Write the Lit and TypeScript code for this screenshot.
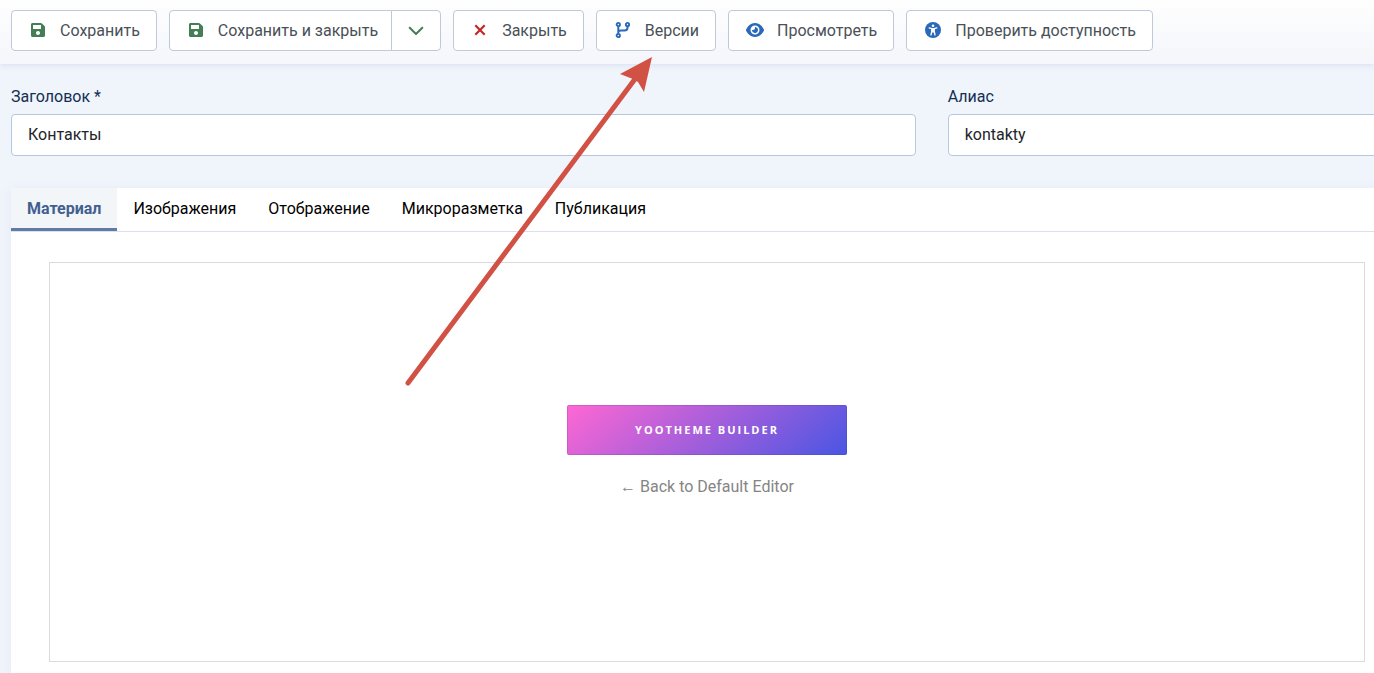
import { LitElement, html, css, svg } from "lit";
import { customElement, property } from "lit/decorators.js";

const shapes = {
  save: {
    box: "0 0 448 512",
    width: 14,
    body: svg`<path d="M433.941 129.941l-83.882-83.882A48 48 0 0 0 316.118 32H48C21.490 32 0 53.490 0 80v352c0 26.510 21.490 48 48 48h352c26.510 0 48-21.490 48-48V163.882a48 48 0 0 0-14.059-33.941zM224 416c-35.346 0-64-28.654-64-64 0-35.346 28.654-64 64-64s64 28.654 64 64c0 35.346-28.654 64-64 64zm96-304.520V212c0 6.627-5.373 12-12 12H76c-6.627 0-12-5.373-12-12V108c0-6.627 5.373-12 12-12h228.520c3.183 0 6.235 1.264 8.485 3.515l3.480 3.480A11.996 11.996 0 0 1 320 111.480z"/>`,
  },
  close: {
    box: "0 0 12 16",
    width: 12,
    body: svg`<path d="M1.300 3.300l9.400 9.400M10.700 3.300l-9.400 9.400" fill="none" stroke="currentColor" stroke-width="2.200"/>`,
  },
  down: {
    box: "0 0 16 16",
    width: 16,
    body: svg`<path d="M1.700 5.700L8 12l6.300-6.300" fill="none" stroke="currentColor" stroke-width="2" stroke-linecap="round" stroke-linejoin="round"/>`,
  },
  branch: {
    box: "0 0 14 16",
    width: 14,
    body: svg`<g fill="none" stroke="currentColor" stroke-width="1.900"><circle cx="2.300" cy="2.500" r="1.650"/><circle cx="11.500" cy="2.500" r="1.650"/><circle cx="2.300" cy="13.500" r="1.650"/><path stroke-width="2" d="M2.300 4.300v7.400M2.500 9.500Q3.300 8.500 5 8.500H8.500Q11.500 8.500 11.500 5.700V4.300"/></g>`,
  },
  eye: {
    box: "0 0 576 512",
    width: 18,
    body: svg`<path d="M288 32c-80.800 0-145.500 36.800-192.600 80.600C48.600 156 17.300 208 2.500 243.700c-3.300 7.900-3.300 16.700 0 24.600C17.300 304 48.600 356 95.400 399.400C142.500 443.200 207.200 480 288 480s145.500-36.800 192.600-80.600c46.800-43.500 78.100-95.400 93-131.100c3.300-7.900 3.300-16.700 0-24.600c-14.900-35.700-46.200-87.700-93-131.100C433.500 68.800 368.800 32 288 32zM144 256a144 144 0 1 1 288 0 144 144 0 1 1-288 0zm144-64c0 35.300-28.700 64-64 64c-7.100 0-13.900-1.200-20.300-3.300c-5.500-1.800-11.900 1.600-11.700 7.400c.3 6.900 1.300 13.800 3.200 20.700c13.700 51.200 66.400 81.600 117.600 67.900s81.600-66.400 67.900-117.600c-11.100-41.500-47.800-69.400-88.600-71.100c-5.800-.2-9.200 6.100-7.400 11.700c2.100 6.400 3.300 13.200 3.300 20.300z"/>`,
  },
  access: {
    box: "0 0 16 16",
    width: 16,
    body: svg`<circle cx="8" cy="8" r="8"/><circle cx="8" cy="3.700" r="1.300" fill="#fff"/><path d="M4.200 5.900L6.800 6.700V9.500L6 12.800M11.800 5.900L9.200 6.700V9.500L10 12.800" fill="none" stroke="#fff" stroke-width="1.400" stroke-linecap="round" stroke-linejoin="round"/><path d="M6.600 6.100h2.800v4.300H6.600z" fill="#fff"/>`,
  },
};

type ShapeName = keyof typeof shapes;

@customElement("tool-icon")
class ToolIcon extends LitElement {
  @property() name: ShapeName = "save";

  static styles = css`
    :host {
      display: flex;
      justify-content: center;
      width: 20px;
      padding-bottom: 1px;
    }
    svg {
      display: block;
      fill: currentColor;
      overflow: visible;
    }
  `;

  render() {
    const s = shapes[this.name];
    return html`<svg viewBox=${s.box} width=${s.width} height="16" aria-hidden="true">${s.body}</svg>`;
  }
}

@customElement("app-root")
class AppRoot extends LitElement {
  static styles = css`
    :host {
      display: flex;
      flex-direction: column;
      position: relative;
      min-height: 100vh;
      overflow: hidden;
      background: #f0f4fb;
      color: #212529;
      font: 16px/24px Roboto, "Noto Sans", sans-serif;
    }
    * {
      box-sizing: border-box;
    }
    button,
    input {
      font: inherit;
      color: inherit;
      margin: 0;
    }
    .toolbar {
      display: flex;
      gap: 12px;
      padding: 10px 11px 13px;
      background: linear-gradient(#fefefe, #f4f6fb);
      box-shadow: 0 1px 6px #d5dfef;
    }
    .tool {
      display: flex;
      align-items: center;
      gap: 12px;
      height: 41px;
      padding: 0 16px;
      border: 1px solid #c0c9d9;
      border-radius: 4px;
      background: #fff;
      color: #495057;
      white-space: nowrap;
    }
    .split {
      display: flex;
    }
    .split .tool:first-child {
      padding-right: 13px;
      border-radius: 4px 0 0 4px;
    }
    .split .tool:last-child {
      padding: 0 14px;
      margin-left: -1px;
      border-radius: 0 4px 4px 0;
    }
    .green {
      color: #457d54;
    }
    .red {
      color: #c52827;
    }
    .blue {
      color: #2a69b8;
    }
    .fields {
      display: grid;
      grid-template-columns: 2fr 1fr;
      gap: 32px;
      padding: 21px 0 32px 11px;
      margin-right: -26px;
    }
    .field {
      display: flex;
      flex-direction: column;
      gap: 5px;
    }
    .field label {
      color: #132f53;
    }
    .field input {
      width: 100%;
      height: 42px;
      padding: 0 16px 2px;
      border: 1px solid #b6c8e1;
      border-radius: 4px;
      background: #fff;
    }
    .card {
      flex: 1;
      margin-left: 11px;
      background: #fff;
      box-shadow: 0 2px 10px #e2e9f4;
    }
    .tabs {
      display: flex;
      height: 44px;
      border-bottom: 1px solid #dbe1ea;
    }
    .tab {
      padding: 2px 16px 0;
      border: 0;
      border-bottom: 3px solid transparent;
      background: none;
      color: #000;
    }
    .tab.active {
      background: #f2f6f9;
      border-color: #5f7ba6;
      color: #42608f;
      font-weight: 700;
    }
    .editor {
      display: flex;
      flex-direction: column;
      align-items: center;
      justify-content: center;
      gap: 20px;
      height: 400px;
      margin: 30px 9px 11px 38px;
      padding-bottom: 20px;
      border: 1px solid #dadbdd;
    }
    .builder {
      width: 280px;
      max-width: 100%;
      height: 50px;
      border: 1px solid rgba(70, 60, 150, 0.2);
      border-radius: 2px;
      background: linear-gradient(140deg, #ff67d3, #4956e3) border-box;
      color: #fff;
      font: 700 11px/16px "Open Sans", "Noto Sans", sans-serif;
      letter-spacing: 2px;
      text-transform: uppercase;
    }
    .back {
      color: #858585;
      text-decoration: none;
    }
    .pointer {
      position: absolute;
      left: 400px;
      top: 50px;
      width: 260px;
      height: 340px;
      pointer-events: none;
    }
  `;

  tool(icon: ShapeName, tone: string, label: string) {
    return html`<button class="tool" type="button">
      <tool-icon class=${tone} name=${icon}></tool-icon>${label}
    </button>`;
  }

  render() {
    return html`
      <div class="toolbar" role="toolbar">
        ${this.tool("save", "green", "Сохранить")}
        <div class="split">
          ${this.tool("save", "green", "Сохранить и закрыть")}
          <button class="tool" type="button" aria-haspopup="true" aria-label="Сохранить и закрыть">
            <tool-icon class="green" name="down"></tool-icon>
          </button>
        </div>
        ${this.tool("close", "red", "Закрыть")}
        ${this.tool("branch", "blue", "Версии")}
        ${this.tool("eye", "blue", "Просмотреть")}
        ${this.tool("access", "blue", "Проверить доступность")}
      </div>
      <div class="fields">
        <div class="field">
          <label for="title">Заголовок *</label>
          <input id="title" type="text" .value=${"Контакты"} />
        </div>
        <div class="field">
          <label for="alias">Алиас</label>
          <input id="alias" type="text" .value=${"kontakty"} />
        </div>
      </div>
      <div class="card">
        <div class="tabs" role="tablist">
          ${["Материал", "Изображения", "Отображение", "Микроразметка", "Публикация"].map(
            (t, i) => html`<button
              class="tab ${i === 0 ? "active" : ""}"
              type="button"
              role="tab"
              aria-selected=${i === 0 ? "true" : "false"}
            >${t}</button>`
          )}
        </div>
        <div class="editor">
          <button class="builder" type="button">YOOtheme Builder</button>
          <a class="back" href="#">← Back to Default Editor</a>
        </div>
      </div>
      <svg class="pointer" viewBox="400 50 260 340" aria-hidden="true">
        <path d="M408 383L638 75" stroke="#d25145" stroke-width="5" stroke-linecap="round" />
        <path d="M652 57L620 74L633 79L638 82L644 92Z" fill="#d25145" />
      </svg>
    `;
  }
}
